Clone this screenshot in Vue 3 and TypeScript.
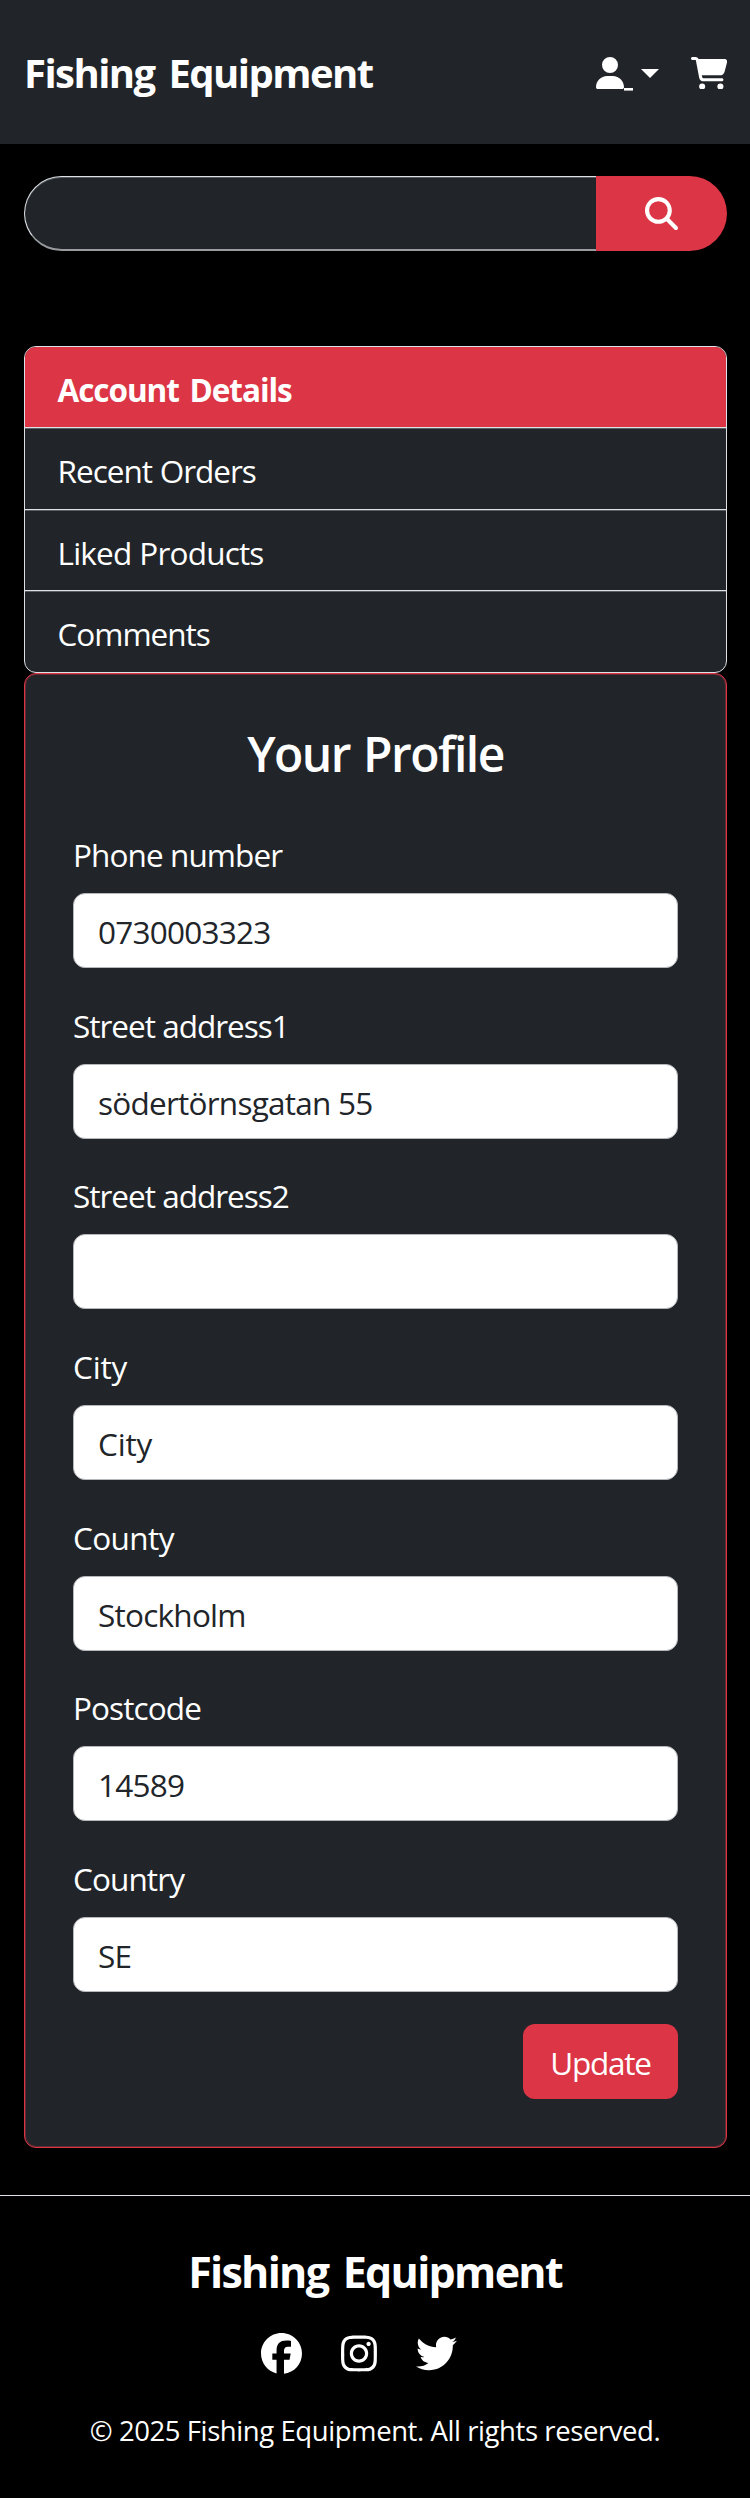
<script setup lang="ts">
import { ref } from 'vue'

interface Field {
  id: string
  label: string
  value: string
}

const menu: { label: string; key: string }[] = [
  { label: 'Account Details', key: 'account' },
  { label: 'Recent Orders', key: 'orders' },
  { label: 'Liked Products', key: 'liked' },
  { label: 'Comments', key: 'comments' },
]
const active = ref('account')
const query = ref('')

const fields = ref<Field[]>([
  { id: 'phone', label: 'Phone number', value: '0730003323' },
  { id: 'street1', label: 'Street address1', value: 'södertörnsgatan 55' },
  { id: 'street2', label: 'Street address2', value: '' },
  { id: 'city', label: 'City', value: 'City' },
  { id: 'county', label: 'County', value: 'Stockholm' },
  { id: 'postcode', label: 'Postcode', value: '14589' },
  { id: 'country', label: 'Country', value: 'SE' },
])
</script>

<template>
  <div class="page">
    <header class="topbar">
      <a class="brand">Fishing Equipment</a>
      <nav class="actions">
        <a class="account">
          <svg class="icon-user" viewBox="0 0 448 512"><path d="M224 256A128 128 0 1 0 224 0a128 128 0 1 0 0 256zm-45.7 48C79.8 304 0 383.8 0 482.3C0 498.7 13.3 512 29.7 512H418.3c16.4 0 29.7-13.3 29.7-29.7C448 383.8 368.2 304 269.7 304H178.3z" /></svg>
          <span class="dash"></span>
          <span class="caret"></span>
        </a>
        <svg class="icon-cart" viewBox="0 0 576 512"><path d="M0 24C0 10.7 10.7 0 24 0H69.5c22 0 41.5 12.8 50.6 32h411c26.3 0 45.5 25 38.6 50.4l-41 152.3c-8.5 31.4-37 53.3-69.5 53.3H170.7l5.4 28.5c2.2 11.3 12.1 19.5 23.6 19.5H488c13.3 0 24 10.7 24 24s-10.7 24-24 24H199.7c-34.6 0-64.3-24.6-70.7-58.5L77.4 54.5c-.7-3.8-4-6.5-7.9-6.5H24C10.7 48 0 37.3 0 24zM128 464a48 48 0 1 1 96 0 48 48 0 1 1 -96 0zm336-48a48 48 0 1 1 0 96 48 48 0 1 1 0-96z" /></svg>
      </nav>
    </header>

    <form class="search" @submit.prevent>
      <input v-model="query" class="search-input" type="text" />
      <button class="search-btn" type="submit">
        <svg class="icon-search" viewBox="0 0 512 512"><path d="M416 208c0 45.9-14.9 88.3-40 122.7L502.6 457.4c12.5 12.5 12.5 32.8 0 45.3s-32.8 12.5-45.3 0L330.7 376c-34.4 25.2-76.8 40-122.7 40C93.1 416 0 322.9 0 208S93.1 0 208 0S416 93.1 416 208zM208 352a144 144 0 1 0 0-288 144 144 0 1 0 0 288z" /></svg>
      </button>
    </form>

    <ul class="menu">
      <li
        v-for="item in menu"
        :key="item.key"
        class="menu-item"
        :class="{ active: item.key === active }"
        @click="active = item.key"
      >{{ item.label }}</li>
    </ul>

    <form class="profile" @submit.prevent>
      <h2 class="profile-title">Your Profile</h2>
      <div v-for="f in fields" :key="f.id" class="field" :class="f.id">
        <label class="label" :for="f.id">{{ f.label }}</label>
        <input :id="f.id" v-model="f.value" class="control" type="text" />
      </div>
      <div class="submit-row">
        <button class="update" type="submit">Update</button>
      </div>
    </form>

    <footer class="footer">
      <h3 class="footer-title">Fishing Equipment</h3>
      <div class="social">
        <svg class="icon-facebook" viewBox="0 0 512 512"><path d="M512 256C512 114.6 397.4 0 256 0S0 114.6 0 256C0 376 82.7 476.8 194.2 504.5V334.2H141.4V256h52.8V222.3c0-87.1 39.4-127.5 125-127.5c16.2 0 44.2 3.2 55.7 6.4V172c-6-.6-16.5-1-29.6-1c-42 0-58.2 15.9-58.2 57.2V256h83.6l-14.4 78.2H287V510.1C413.8 494.8 512 386.9 512 256z" /></svg>
        <svg class="icon-instagram" viewBox="0 0 448 512"><path d="M224.1 141c-63.6 0-114.9 51.3-114.9 114.9s51.3 114.9 114.9 114.9S339 319.5 339 255.9 287.7 141 224.1 141zm0 189.6c-41.1 0-74.7-33.5-74.7-74.7s33.5-74.7 74.7-74.7 74.7 33.5 74.7 74.7-33.6 74.7-74.7 74.7zm146.4-194.3c0 14.9-12 26.8-26.8 26.8-14.9 0-26.8-12-26.8-26.8s12-26.8 26.8-26.8 26.8 12 26.8 26.8zm76.1 27.2c-1.7-35.9-9.9-67.7-36.2-93.9-26.2-26.2-58-34.4-93.9-36.2-37-2.1-147.9-2.1-184.9 0-35.8 1.7-67.6 9.9-93.9 36.1s-34.4 58-36.2 93.9c-2.1 37-2.1 147.9 0 184.9 1.7 35.9 9.9 67.7 36.2 93.9s58 34.4 93.9 36.2c37 2.1 147.9 2.1 184.9 0 35.9-1.7 67.7-9.9 93.9-36.2 26.2-26.2 34.4-58 36.2-93.9 2.1-37 2.1-147.8 0-184.8zM398.8 388c-7.8 19.6-22.9 34.7-42.6 42.6-29.5 11.7-99.5 9-132.1 9s-102.7 2.6-132.1-9c-19.6-7.8-34.7-22.9-42.6-42.6-11.7-29.5-9-99.5-9-132.1s-2.6-102.7 9-132.1c7.8-19.6 22.9-34.7 42.6-42.6 29.5-11.7 99.5-9 132.1-9s102.7-2.6 132.1 9c19.6 7.8 34.7 22.9 42.6 42.6 11.7 29.5 9 99.5 9 132.1s2.7 102.7-9 132.1z" /></svg>
        <svg class="icon-twitter" viewBox="0 0 512 512"><path d="M459.37 151.716c.325 4.548.325 9.097.325 13.645 0 138.72-105.583 298.558-298.558 298.558-59.452 0-114.68-17.219-161.137-47.106 8.447.974 16.568 1.299 25.34 1.299 49.055 0 94.213-16.568 130.274-44.832-46.132-.975-84.792-31.188-98.112-72.772 6.498.974 12.995 1.624 19.818 1.624 9.421 0 18.843-1.3 27.614-3.573-48.081-9.747-84.143-51.98-84.143-102.985v-1.299c13.969 7.797 30.214 12.67 47.431 13.319-28.264-18.843-46.781-51.005-46.781-87.391 0-19.492 5.197-37.36 14.294-52.954 51.655 63.675 129.3 105.258 216.365 109.807-1.624-7.797-2.599-15.918-2.599-24.04 0-57.828 46.782-104.934 104.934-104.934 30.213 0 57.502 12.67 76.67 33.137 23.715-4.548 46.456-13.32 66.599-25.34-7.798 24.366-24.366 44.833-46.132 57.827 21.117-2.273 41.584-8.122 60.426-16.243-14.292 20.791-32.161 39.308-52.628 54.253z" /></svg>
      </div>
      <p class="copyright">© 2025 Fishing Equipment. All rights reserved.</p>
    </footer>
  </div>
</template>

<style>
html,
body {
  margin: 0;
  background: #000;
}
</style>

<style scoped>
.page {
  box-sizing: border-box;
  width: 750px;
  height: 2498px;
  overflow: hidden;
  background: #000;
  color: #fff;
  font-family: 'Segoe UI', 'Open Sans', 'Noto Sans', sans-serif;
  font-size: 31.5px;
  line-height: 49px;
}
.page *,
.page *::before {
  box-sizing: border-box;
}
svg {
  display: block;
  fill: #fff;
  flex: none;
}
.topbar {
  display: flex;
  align-items: center;
  justify-content: space-between;
  height: 144px;
  padding: 0 23px 0 24px;
  background: #212529;
}
.brand {
  padding-top: 1px;
  font-size: 40px;
  font-weight: 700;
  letter-spacing: -1.55px;
  word-spacing: 5px;
  white-space: nowrap;
}
.actions {
  display: flex;
  align-items: center;
  gap: 32px;
  padding-top: 2px;
}
.account {
  display: flex;
  align-items: center;
  height: 36px;
}
.icon-user {
  width: 28px;
  height: 32px;
}
.dash {
  align-self: flex-end;
  width: 9px;
  height: 3px;
  background: linear-gradient(#fff 67%, #a6a8a9 67%);
}
.caret {
  margin: 0 0 0 8px;
  border-top: 9.5px solid #fff;
  border-left: 9.5px solid transparent;
  border-right: 9.5px solid transparent;
}
.icon-cart {
  width: 36.5px;
  height: 32.5px;
}
.search {
  display: flex;
  height: 75px;
  margin: 32px 23px 0 24px;
}
.search-input {
  flex: 1;
  min-width: 0;
  padding: 0 24px;
  background: #212529;
  border: 1px solid #dee2e6;
  border-bottom: 2px solid #999c9f;
  border-right: 0;
  border-radius: 38px 0 0 38px;
  box-shadow: inset 0 1px 0 #555a5e;
  color: #fff;
  font: inherit;
  outline: none;
}
.search-btn {
  display: flex;
  align-items: center;
  justify-content: center;
  width: 131px;
  padding: 0;
  background: #dc3545;
  border: 0;
  border-radius: 0 38px 38px 0;
}
.icon-search {
  width: 33px;
  height: 33px;
}
.menu {
  margin: 95px 23px 0 24px;
  padding: 0;
  list-style: none;
  border: 1px solid #dee2e6;
  border-radius: 12px;
  overflow: hidden;
  background: #212529;
}
.menu-item {
  height: 81.4px;
  padding: 18px 32px 0 32.5px;
  border-bottom: 1px solid #dee2e6;
  letter-spacing: -1px;
  word-spacing: 0.5px;
}
.menu-item + .menu-item {
  box-shadow: inset 0 1px 0 #5a5f63;
}
.menu-item:nth-child(3) {
  letter-spacing: -0.8px;
}
.menu-item:last-child {
  border-bottom: 0;
  height: 80.8px;
}
.menu-item.active {
  background: #dc3545;
  font-weight: 700;
  letter-spacing: -1.05px;
  word-spacing: 3.5px;
}
.profile {
  height: 1475px;
  margin: 0 23px 0 24px;
  padding: 47px 48px 0;
  background: #212529;
  border: 1px solid #dc3545;
  border-radius: 12px;
  box-shadow: inset 0 0 0 1px rgba(220, 53, 69, 0.35);
}
.profile-title {
  margin: 0 0 43px;
  font-size: 48px;
  line-height: 66px;
  font-weight: 600;
  letter-spacing: -1.5px;
  word-spacing: 2px;
  text-align: center;
  white-space: nowrap;
}
.field {
  height: 170.65px;
}
.label {
  display: block;
  height: 49px;
  margin-bottom: 14px;
  letter-spacing: -0.9px;
}
.street1 .label,
.street2 .label {
  letter-spacing: -1px;
}
.city .label {
  letter-spacing: -0.2px;
}
.county .label {
  letter-spacing: -0.6px;
}
.control {
  display: block;
  width: 100%;
  height: 75px;
  padding: 2px 24px 0;
  background: #fff;
  border: 1px solid #b5b8bb;
  border-radius: 12px;
  color: #212529;
  font-family: inherit;
  font-size: 31.5px;
  letter-spacing: -0.75px;
  outline: none;
}
.city .control {
  letter-spacing: -0.2px;
}
.submit-row {
  display: flex;
  justify-content: flex-end;
}
.update {
  width: 155px;
  height: 75px;
  padding: 2px 0 0;
  background: #dc3545;
  border: 0;
  border-radius: 12px;
  color: #fff;
  font-family: inherit;
  font-size: 31.5px;
  letter-spacing: -1.2px;
}
.footer {
  margin-top: 47px;
  padding-top: 49px;
  border-top: 1px solid #dee2e6;
  text-align: center;
}
.footer-title {
  margin: 0;
  font-size: 43px;
  line-height: 54px;
  font-weight: 700;
  letter-spacing: -1.7px;
  word-spacing: 5px;
}
.social {
  display: flex;
  align-items: center;
  gap: 39px;
  margin: 34px 0 0 260.5px;
  height: 41px;
}
.icon-facebook,
.icon-twitter {
  width: 41px;
  height: 41px;
}
.icon-instagram {
  width: 36px;
  height: 41px;
}
.copyright {
  margin: 35px 0 0;
  font-size: 27.5px;
  line-height: 43px;
  letter-spacing: -0.42px;
  white-space: nowrap;
}
</style>
